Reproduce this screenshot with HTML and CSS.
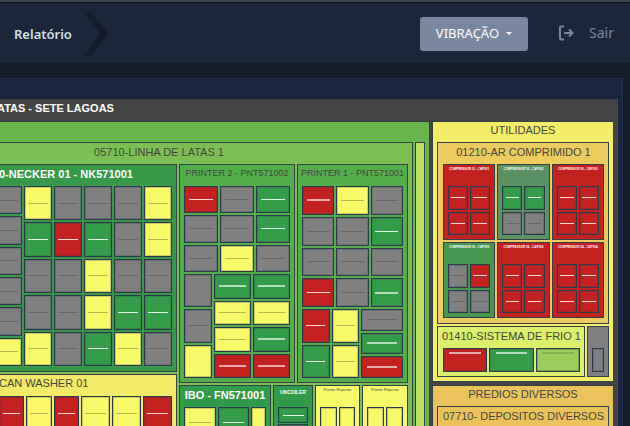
FILE: index.html
```html
<!DOCTYPE html>
<html lang="pt-BR">
<head>
<meta charset="utf-8">
<title>Relatório</title>
<link rel="stylesheet" href="styles.css">
</head>
<body>
<header class="topbar">
  <a class="crumb" href="#">Relatório</a>
  <svg class="chevron" viewBox="0 0 26 46" aria-hidden="true">
    <defs><linearGradient id="shade" x1="0" x2="1"><stop offset="0" stop-color="#162030"/><stop offset="1" stop-color="#101925"/></linearGradient></defs>
    <path d="M1 1H9L25 22.500L8 45H1L17 22.500Z" fill="url(#shade)"/>
  </svg>
  <button class="mode" type="button">VIBRAÇÃO<span class="caret"></span></button>
  <a class="logout" href="#">
    <svg viewBox="0 0 16 16" aria-hidden="true"><path d="M6 1.500H3.500Q2 1.500 2 3V13Q2 14.500 3.500 14.500H6M6 8H14.500M11 4.500L14.500 8L11 11.500"/></svg>
    Sair
  </a>
</header>
<main class="panel">
  <section class="map">
    <h1 class="root-title">ATAS - SETE LAGOAS</h1>
    <div class="plant">
      <section class="node lime area">
        <div class="area-cols">
          <section class="node leaf line">
            <h2 class="title line-title">05710-LINHA DE LATAS 1</h2>
            <div class="line-cols">
              <div class="stack">
                <section class="node forest necker">
                  <h3 class="title strong start">0-NECKER 01 - NK571001</h3>
                  <div class="necker-tiles">
                    <div class="tiles"><i class="n"></i><i class="n"></i><i class="n"></i><i class="n"></i><i class="n"></i><i class="y"></i></div>
                    <div class="tiles five">
                      <i class="y"></i><i class="n"></i><i class="n"></i><i class="n"></i><i class="y"></i>
                      <i class="g"></i><i class="r"></i><i class="g"></i><i class="n"></i><i class="y"></i>
                      <i class="n"></i><i class="n"></i><i class="y"></i><i class="n"></i><i class="n"></i>
                      <i class="n"></i><i class="n"></i><i class="y"></i><i class="g"></i><i class="g"></i>
                      <i class="y"></i><i class="n"></i><i class="g"></i><i class="y"></i><i class="n"></i>
                    </div>
                  </div>
                </section>
                <section class="node straw washer">
                  <h3 class="title start">CAN WASHER 01</h3>
                  <div class="washer-tiles">
                    <i class="r tall"></i><i class="y tall"></i><i class="r tall"></i><i class="y"></i><i class="y"></i><i class="r"></i>
                  </div>
                </section>
              </div>
              <div class="stack">
                <div class="printers">
                  <section class="node grass">
                    <h3 class="title small">PRINTER 2 - PNT571002</h3>
                    <div class="printer-two">
                      <div class="tiles three">
                        <i class="r"></i><i class="n"></i><i class="g"></i>
                        <i class="n"></i><i class="n"></i><i class="g"></i>
                        <i class="n"></i><i class="y"></i><i class="n"></i>
                      </div>
                      <div class="lower-two">
                        <div class="tiles"><i class="n blank"></i><i class="n"></i><i class="y blank"></i></div>
                        <div class="tiles two">
                          <i class="g bold"></i><i class="g bold"></i><i class="y"></i><i class="y"></i>
                          <i class="y"></i><i class="g bold"></i><i class="r bold"></i><i class="r bold"></i>
                        </div>
                      </div>
                    </div>
                  </section>
                  <section class="node grass">
                    <h3 class="title small">PRINTER 1 - PNT571001</h3>
                    <div class="printer-one">
                      <div class="tiles three">
                        <i class="r bold"></i><i class="y"></i><i class="n"></i>
                        <i class="n"></i><i class="n"></i><i class="g"></i>
                        <i class="n"></i><i class="n"></i><i class="n"></i>
                        <i class="r"></i><i class="n"></i><i class="g bold"></i>
                      </div>
                      <div class="lower-one">
                        <div class="tiles two"><i class="r"></i><i class="y"></i><i class="g"></i><i class="y"></i></div>
                        <div class="tiles"><i class="n"></i><i class="g bold"></i><i class="r bold"></i></div>
                      </div>
                    </div>
                  </section>
                </div>
                <div class="units">
                  <section class="node green">
                    <h3 class="title strong">IBO - FN571001</h3>
                    <div class="ibo-tiles"><i class="y"></i><i class="g"></i><i class="y blank"></i></div>
                  </section>
                  <section class="node green">
                    <h3 class="title tiny strong">UNCOILER</h3>
                    <div class="uncoiler-tiles"><i class="g"></i><i class="g blank"></i></div>
                  </section>
                  <section class="node yellow">
                    <h3 class="title micro">Printer Rejector</h3>
                    <div class="tiles two"><i class="y blank"></i><i class="y blank"></i></div>
                  </section>
                  <section class="node yellow">
                    <h3 class="title micro">Printer Rejector</h3>
                    <div class="tiles two"><i class="y blank"></i><i class="y blank"></i></div>
                  </section>
                </div>
              </div>
            </div>
          </section>
          <div class="node pale"></div>
        </div>
      </section>
      <div class="side">
        <section class="node lemon area">
          <h2 class="title top">UTILIDADES</h2>
          <section class="node amber inner air">
            <h3 class="title">01210-AR COMPRIMIDO 1</h3>
            <div class="cards">
              <section class="node red"><h4 class="title nano">COMPRESSOR 01 - CAP001</h4><div class="tiles two"><i class="r"></i><i class="r"></i><i class="r"></i><i class="r"></i></div></section>
              <section class="node sage"><h4 class="title nano">COMPRESSOR 02 - CAP002</h4><div class="tiles two"><i class="g"></i><i class="g"></i><i class="n"></i><i class="n"></i></div></section>
              <section class="node red"><h4 class="title nano">COMPRESSOR 03 - CAP003</h4><div class="tiles two"><i class="r"></i><i class="r"></i><i class="r"></i><i class="r"></i></div></section>
              <section class="node moss"><h4 class="title nano">COMPRESSOR 05 - CAP005</h4><div class="tiles two"><i class="n"></i><i class="r"></i><i class="n"></i><i class="n"></i></div></section>
              <section class="node red"><h4 class="title nano">COMPRESSOR 06 - CAP006</h4><div class="tiles two"><i class="r"></i><i class="r"></i><i class="r"></i><i class="r"></i></div></section>
              <section class="node red"><h4 class="title nano">COMPRESSOR 04 - CAP004</h4><div class="tiles two"><i class="r"></i><i class="r"></i><i class="r"></i><i class="r"></i></div></section>
            </div>
          </section>
          <div class="cold-row">
            <section class="node citron inner">
              <h3 class="title">01410-SISTEMA DE FRIO 1</h3>
              <div class="cold-tiles"><i class="r bold high"></i><i class="g bold high"></i><i class="l bold high"></i></div>
            </section>
            <section class="node gray spare"><i class="n blank"></i></section>
          </div>
        </section>
        <section class="node orange area">
          <h2 class="title top">PREDIOS DIVERSOS</h2>
          <section class="node orange inner depots">
            <h3 class="title">07710- DEPOSITOS DIVERSOS</h3>
          </section>
        </section>
      </div>
    </div>
  </section>
</main>
</body>
</html>
```
FILE: styles.css
```css
* { box-sizing: border-box; }

body {
  margin: 0;
  height: 100vh;
  overflow: hidden;
  background: #141b29;
  color: #444;
  font: 11px/20px "Liberation Sans", Arial, sans-serif;
}

h1, h2, h3, h4 { margin: 0; font-size: inherit; font-weight: normal; }

/* Top bar */
.topbar {
  display: flex;
  align-items: center;
  height: 63px;
  padding: 3px 16px 0 14px;
  border-top: 2px solid #3d4650;
  box-shadow: inset 0 1px #10151f;
  background: #1c263b;
  font: 13px/20px "Noto Sans", sans-serif;
}
.crumb { color: #cfe0e4; font-weight: 600; text-decoration: none; }
.chevron { width: 26px; height: 46px; margin-left: 11px; }
.mode {
  display: flex;
  align-items: center;
  gap: 7px;
  height: 34px;
  margin-left: auto;
  padding: 0 16px 2px;
  border: 0;
  border-radius: 3px;
  background: #7987a1;
  color: #fff;
  font: 13px/20px "Noto Sans", sans-serif;
}
.caret { border: 3px solid transparent; border-top-color: #fff; border-bottom: 0; }
.logout {
  display: flex;
  align-items: center;
  gap: 15px;
  margin-left: 30px;
  color: #7987a1;
  font-size: 14px;
  line-height: 16px;
  padding-bottom: 2px;
  text-decoration: none;
}
.logout svg { width: 16px; height: 16px; fill: none; stroke: #7987a1; stroke-width: 2; }

/* Panel and tree map */
.panel {
  margin: 15px 7px 0 0;
  padding: 20px 4px 0 0;
  border: 1px solid #212e4c;
  border-width: 1px 1px 0 0;
  background: #1c2540;
}
.map { margin-left: -8px; padding-right: 4px; background: #444; }
.root-title { padding: 0 0 3px 5px; color: #fff; font-weight: bold; line-height: 19px; }

.plant { display: grid; grid-template-columns: 438fr 182fr; gap: 2px; }
.side { display: grid; gap: 3px; align-content: start; }
.node { min-width: 0; border: 1px solid #344048; padding: 0 4px 4px; }
.title {
  height: 21px;
  margin: 0 -4px;
  line-height: 18px;
  text-align: center;
  white-space: nowrap;
}
.top { height: 20px; line-height: 16px; }
.start { text-align: left; padding-left: 9px; }
.strong { color: #fff; font-weight: bold; }
.small { font-size: 9px; line-height: 16px; }
.tiny { font-size: 5px; line-height: 12px; }
.micro { font-size: 4px; line-height: 8px; }
.nano { color: #fff; font-size: 3px; font-weight: bold; line-height: 9px; }

.lime { background: #69b64f; }
.leaf { background: #7cc055; }
.forest { background: #37984a; }
.grass { background: #54ad4b; }
.green { background: #329b49; }
.straw { background: #f3ea68; }
.yellow { background: #f9fa6a; }
.pale { background: #b9de62; }
.lemon { background: #f5ec67; }
.amber { background: #eecb5e; }
.orange { background: #ecc35b; }
.citron { background: #ddf06b; }
.red { background: #c32220; }
.sage { background: #5b9163; }
.moss { background: #45974f; }
.gray { background: #808080; }

.lime { padding-left: 0; border-left: 0; padding-top: 20px; }
.area-cols { display: grid; grid-template-columns: 421fr 10fr; gap: 2px; }
.line { padding-left: 0; border-left: 0; }
.line-title { padding-right: 82px; }
.line-cols { display: grid; grid-template-columns: 185fr 229fr; gap: 2px; }
.stack { display: grid; gap: 2px; align-content: start; min-width: 0; }
.necker { padding: 0 4px 5px 2px; border-left: 0; }
.washer { padding-left: 7px; border-left: 0; }
.washer .start { padding-left: 4px; line-height: 16px; }
.printers { display: grid; grid-template-columns: 116fr 111fr; gap: 2px; }
.units { display: grid; grid-template-columns: 92fr 40fr 45fr 46fr; gap: 2px; }
.inner { padding-left: 5px; }
.air { padding-bottom: 5px; margin-bottom: 2px; }
.cards { display: grid; grid-template-columns: repeat(3, 1fr); gap: 2px; }
.cards .tiles { height: 49px; }
.cold-row { display: grid; grid-template-columns: 148fr 22fr; gap: 2px; }
.cold-tiles { display: grid; grid-template-columns: repeat(3, 1fr); grid-auto-rows: 24px; gap: 2px; }
.spare { display: grid; padding-top: 21px; }
.depots { min-height: 60px; }

/* Tiles */
.tiles { display: grid; grid-auto-rows: 1fr; gap: 2px; }
.two { grid-template-columns: repeat(2, 1fr); }
.three { grid-template-columns: repeat(3, 1fr); }
.five { grid-template-columns: repeat(5, 1fr); }
.necker-tiles { display: grid; grid-template-columns: 28fr 148fr; gap: 2px; height: 180px; }
.washer-tiles { display: grid; grid-template-columns: 25fr 26fr 25fr 29fr 29fr 29fr; gap: 2px; height: 30px; }
.printer-two { display: grid; grid-template-rows: 86px 104px; gap: 2px; }
.lower-two { display: grid; grid-template-columns: 28fr 76fr; gap: 2px; }
.printer-one { display: grid; grid-template-rows: 121px 69px; gap: 2px; }
.lower-one { display: grid; grid-template-columns: 57fr 42fr; gap: 2px; }
.ibo-tiles { display: grid; grid-template-columns: 32fr 31fr 15fr; gap: 2px; height: 30px; }
.uncoiler-tiles { display: grid; grid-template-rows: 16px 16px; gap: 1px; }
.units .tiles { height: 34px; }
.washer-tiles .tall { height: 34px; }

i {
  display: flex;
  align-items: center;
  justify-content: center;
  min-width: 0;
  min-height: 0;
  border: 1px solid #2b3b4a;
  box-shadow: inset 0 0 0 1px #2b3b4a40;
}
i::after { content: ""; width: 75%; height: 1px; background: currentColor; }
.bold::after { height: 2px; opacity: 0.75; }
.blank::after { display: none; }
.high { align-items: flex-start; padding-top: 3px; }
.n { background: #808080; color: #666; }
.y { background: #f9fa6a; color: #b5b552; }
.g { background: #349c48; color: #e0f3e4; }
.r { background: #c32220; color: #f5dada; }
.l { background: #9bcd5c; color: #7da54c; }
```
